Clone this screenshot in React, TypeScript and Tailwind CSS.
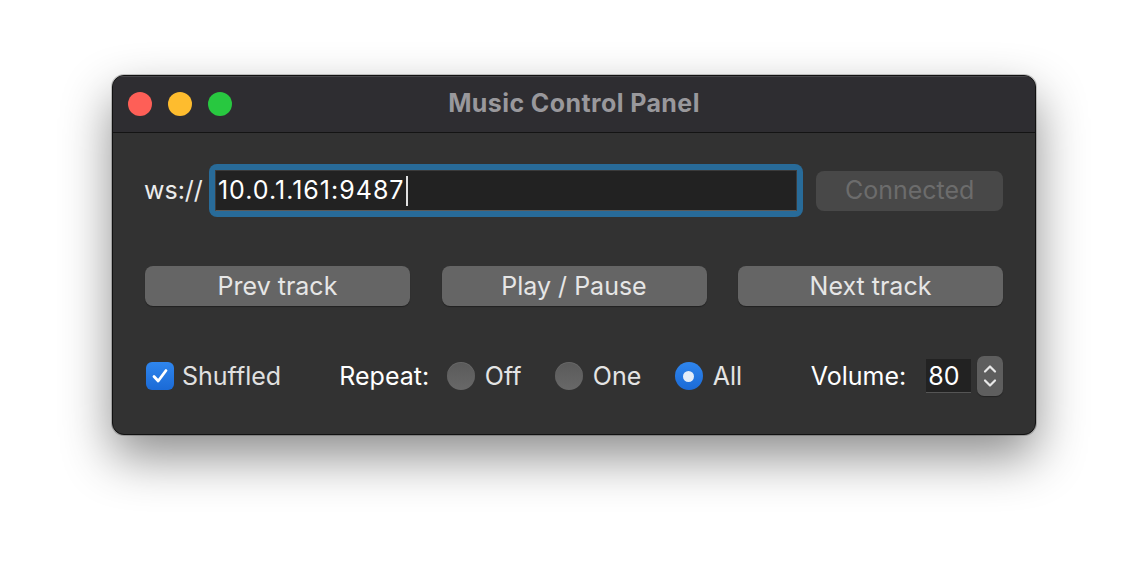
import React from "react";

const font = { fontFamily: "Inter, 'Noto Sans', 'Liberation Sans', sans-serif" };

function Radio({ checked, label, w }: { checked?: boolean; label: string; w: string }) {
  return (
    <div className="flex items-center">
      {checked ? (
        <div className="w-[28px] h-[28px] rounded-full bg-gradient-to-b from-[#2f86ee] to-[#1b6ad6] flex items-center justify-center shrink-0">
          <div className="w-[11px] h-[11px] rounded-full bg-[#e4edf8]" />
        </div>
      ) : (
        <div className="w-[28px] h-[28px] rounded-full bg-gradient-to-b from-[#5a5a5a] to-[#686868] shadow-[inset_0_1px_0_rgba(255,255,255,0.08)] shrink-0" />
      )}
      <span className={`ml-[10px] pt-[2px] text-[25px] text-[#e4e4e4] ${w}`}>{label}</span>
    </div>
  );
}

function Btn({ label }: { label: string }) {
  return (
    <div className="w-[265px] h-[40px] rounded-[8px] bg-[#656565] shadow-[0_1px_1px_rgba(0,0,0,0.35)] flex items-center justify-center text-[25px] text-[#e6e6e6] pt-[1px]">
      {label}
    </div>
  );
}

export default function App() {
  return (
    <div className="w-[1148px] h-[584px] bg-white pt-[75px] pl-[112px]" style={font}>
      <div className="w-[924px] h-[360px] rounded-[12px] bg-[#323232] border border-[#111] shadow-[0_22px_50px_rgba(0,0,0,0.45),0_0_0_1px_rgba(0,0,0,0.2)] overflow-hidden flex flex-col">
        {/* title bar */}
        <div className="h-[57px] bg-[#2e2d31] border-b border-[#141414] shadow-[inset_0_1px_0_rgba(255,255,255,0.12)] relative flex items-center justify-center">
          <div className="absolute left-[15px] top-[16px] flex gap-[16px]">
            <div className="w-[24px] h-[24px] rounded-full bg-[#fe5f57]" />
            <div className="w-[24px] h-[24px] rounded-full bg-[#febc2e]" />
            <div className="w-[24px] h-[24px] rounded-full bg-[#28c840]" />
          </div>
          <span className="text-[25px] font-bold text-[#99989c] tracking-[0.4px]">Music Control Panel</span>
        </div>
        {/* body */}
        <div className="flex flex-col pl-[31px] pr-[32px] pt-[31px]">
          <div className="flex items-center h-[53px]">
            <span className="text-[25px] text-[#ececec] w-[65px] pt-[1px]">ws://</span>
            <div className="w-[595px] h-[53px] rounded-[8px] bg-[#286b99] p-[6px]">
              <div className="w-full h-full bg-[#222222] border border-[#3b3b3b] border-b-[#5a5a5a] flex items-center pl-[2px]">
                <span className="text-[25px] text-white tracking-[1px] pt-[1px]">10.0.1.161:9487</span>
                <div className="w-[2px] h-[30px] bg-[#e0e0e0] ml-[1px]" />
              </div>
            </div>
            <div className="ml-[13px] w-[187px] h-[40px] rounded-[8px] bg-[#484848] flex items-center justify-center text-[25px] text-[#6c6c6c] pt-[1px]">
              Connected
            </div>
          </div>
          <div className="flex items-center justify-between mt-[49px] pl-[1px]">
            <Btn label="Prev track" />
            <Btn label="Play / Pause" />
            <Btn label="Next track" />
          </div>
          <div className="flex items-center mt-[50px] h-[40px] pl-[2px]">
            <div className="w-[28px] h-[28px] rounded-[6px] bg-gradient-to-b from-[#2f86ee] to-[#1b6ad6] flex items-center justify-center shrink-0">
              <svg width="20" height="20" viewBox="0 0 20 20" fill="none">
                <path d="M4 10.5 L8.2 15 L16 4.5" stroke="white" strokeWidth="2.8" strokeLinecap="round" strokeLinejoin="round" />
              </svg>
            </div>
            <span className="ml-[8px] w-[158px] pt-[2px] text-[25px] text-[#e0e0e0]">Shuffled</span>
            <span className="w-[108px] pt-[2px] text-[25px] text-white">Repeat:</span>
            <Radio label="Off" w="w-[70px]" />
            <Radio label="One" w="w-[82px]" />
            <Radio checked label="All" w="w-[98px]" />
            <span className="w-[116px] pt-[2px] text-[25px] text-white">Volume:</span>
            <div className="w-[45px] h-[34px] bg-[#222222] border-b border-[#555] flex items-center pl-[2px] pt-[2px] text-[25px] text-white">
              80
            </div>
            <div className="ml-[6px] w-[26px] h-[40px] rounded-[7px] bg-[#5e5e5e] flex flex-col items-center justify-center gap-[4px] shadow-[0_1px_1px_rgba(0,0,0,0.3)]">
              <svg width="14" height="10" viewBox="0 0 14 10" fill="none">
                <path d="M2 7.5 L7 2.5 L12 7.5" stroke="#e8e8e8" strokeWidth="2.2" strokeLinecap="round" strokeLinejoin="round" />
              </svg>
              <svg width="14" height="10" viewBox="0 0 14 10" fill="none">
                <path d="M2 2.5 L7 7.5 L12 2.5" stroke="#e8e8e8" strokeWidth="2.2" strokeLinecap="round" strokeLinejoin="round" />
              </svg>
            </div>
          </div>
        </div>
      </div>
    </div>
  );
}
